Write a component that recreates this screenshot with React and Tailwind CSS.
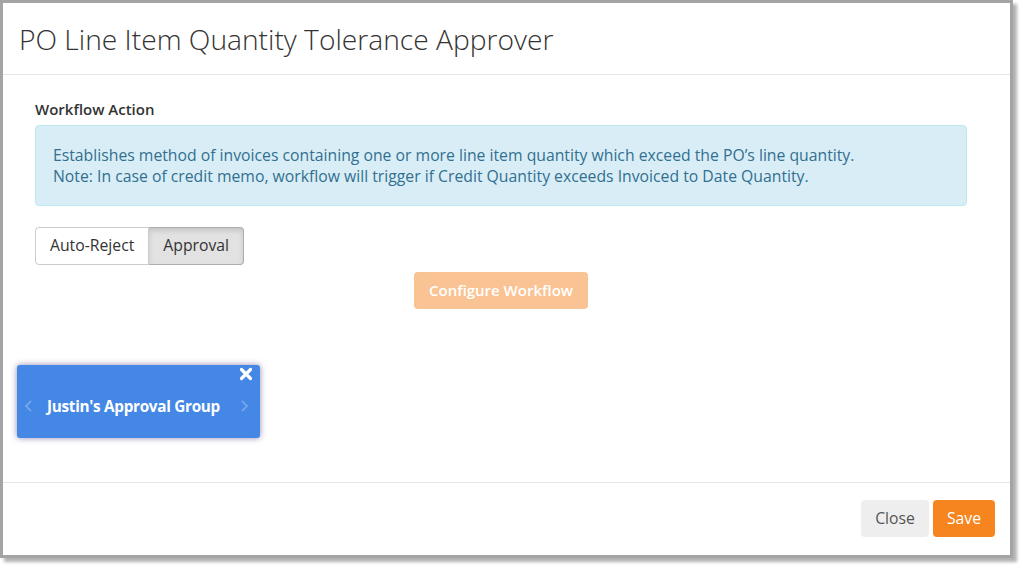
import React from "react";

function App() {
  return (
    <div className="w-[1023px] h-[568px] bg-white overflow-hidden" style={{ fontFamily: '"Open Sans", "Liberation Sans", sans-serif' }}>
      {/* modal frame */}
      <div className="w-[1013px] h-[558px] border-[3px] border-[#a4a4a4] bg-white flex flex-col shadow-[4px_4px_3px_rgba(0,0,0,0.3)]">
        {/* Header */}
        <div className="h-[72px] border-b border-[#e5e5e5] flex items-center pl-[16px] pt-[2px] shrink-0">
          <h1 className="text-[28.2px] font-light text-[#333] leading-none">
            PO Line Item Quantity Tolerance Approver
          </h1>
        </div>

        {/* Body */}
        <div className="flex-1 flex flex-col pl-[32px] pr-[43px] pt-[24px]">
          <div className="text-[15px] font-semibold text-[#333] leading-[20px]">Workflow Action</div>
          <div className="mt-[6px] rounded-[4px] border border-[#bce8f1] bg-[#d9edf7] text-[#31708f] text-[15.75px] leading-[21px] px-[17px] pt-[19px] pb-[18px]">
            <div>Establishes method of invoices containing one or more line item quantity which exceed the PO’s line quantity.</div>
            <div>Note: In case of credit memo, workflow will trigger if Credit Quantity exceeds Invoiced to Date Quantity.</div>
          </div>

          <div className="mt-[21px] flex">
            <button className="h-[38px] px-[14px] text-[15.75px] text-[#333] bg-white border border-[#ccc] rounded-l-[4px]">
              Auto-Reject
            </button>
            <button className="h-[38px] px-[14px] text-[15.75px] text-[#333] bg-[#e2e2e2] border border-l-0 border-[#adadad] rounded-r-[4px] shadow-[inset_0_3px_5px_rgba(0,0,0,0.125)]">
              Approval
            </button>
          </div>

          <div className="mt-[7px] flex justify-center">
            <button className="h-[37px] px-[15px] rounded-[4px] bg-[#f9c393] text-white text-[15px] font-semibold">
              Configure Workflow
            </button>
          </div>

          {/* approver card */}
          <div className="mt-[56px] -ml-[18px] relative w-[243px] h-[73px] rounded-[3px] bg-[#4487e4] shadow-[0_0_6px_rgba(60,40,120,0.55)] flex items-center pl-[6px] pt-[9px]">
            <svg width="12" height="14" viewBox="0 0 12 14" className="opacity-40">
              <path d="M8 2 L3 7 L8 12" fill="none" stroke="#d0e0ff" strokeWidth="1.6" />
            </svg>
            <span className="ml-[12px] text-white text-[15.3px] font-bold tracking-[-0.3px]">Justin's Approval Group</span>
            <svg width="12" height="14" viewBox="0 0 12 14" className="opacity-40 ml-auto mr-[10px]">
              <path d="M4 2 L9 7 L4 12" fill="none" stroke="#d0e0ff" strokeWidth="1.6" />
            </svg>
            <svg width="14" height="14" viewBox="0 0 14 14" className="absolute top-[2px] right-[7px]">
              <path d="M2.5 2.5 L11.5 11.5 M11.5 2.5 L2.5 11.5" stroke="white" strokeWidth="3.2" strokeLinecap="round" />
            </svg>
          </div>
        </div>

        {/* Footer */}
        <div className="h-[73px] border-t border-[#e5e5e5] flex items-start justify-end gap-[4px] pr-[15px] pt-[17px] shrink-0">
          <button className="h-[37px] px-[14px] rounded-[4px] bg-[#eeeeee] text-[#555] text-[15.75px]">Close</button>
          <button className="h-[37px] px-[14px] rounded-[4px] bg-[#f6841f] text-white text-[15.75px]">Save</button>
        </div>
      </div>
    </div>
  );
}

export default App;
